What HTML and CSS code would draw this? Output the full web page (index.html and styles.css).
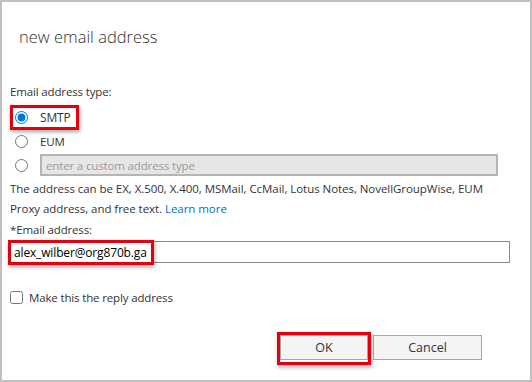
FILE: index.html
```html
<!DOCTYPE html>
<html lang="en">
<head>
    <meta charset="UTF-8">
    <title>new email address</title>
    <link rel="stylesheet" href="styles.css">
</head>
<body>
    <div class="dialog">
        <h1 class="title">new email address</h1>

        <div class="label">Email address type:</div>
        <div class="radio-row first">
            <span class="mark mark-smtp">
                <input type="radio" name="type" id="smtp" checked>
                <label for="smtp">SMTP</label>
            </span>
        </div>
        <div class="radio-row">
            <input type="radio" name="type" id="eum">
            <label for="eum">EUM</label>
        </div>
        <div class="radio-row">
            <input type="radio" name="type" id="custom">
            <input type="text" class="custom" placeholder="enter a custom address type" disabled>
        </div>

        <p class="hint">The address can be EX, X.500, X.400, MSMail, CcMail, Lotus Notes, NovellGroupWise, EUM Proxy address, and free text. <a href="#">Learn more</a></p>

        <div class="label label-email">*Email address:</div>
        <div class="email">
            <span class="mark mark-email">alex_wilber@org870b.ga</span>
        </div>

        <div class="check-row">
            <input type="checkbox" id="reply">
            <label for="reply">Make this the reply address</label>
        </div>

        <div class="actions">
            <span class="mark mark-ok"><button type="button" class="btn btn-ok">OK</button></span>
            <button type="button" class="btn btn-cancel">Cancel</button>
        </div>
    </div> <!-- dialog end -->
</body>
</html>
```

FILE: styles.css
```css
body {
    margin: 0;
    background-color: #fff;
}

body * {
    font-family: "Segoe UI", "Open Sans", "Noto Sans", sans-serif;
}

div.dialog {
    width: 532px;
    height: 382px;
    box-sizing: border-box;
    border: 2px solid #bfbfbf;
    padding: 0 20px 0 8px;
    color: #333;
    font-size: 11.5px;
    letter-spacing: -0.15px;
}

h1.title {
    margin: 0;
    padding: 23px 0 0 9px;
    height: 58px;
    font-size: 16.5px;
    font-weight: 300;
    line-height: 24px;
    letter-spacing: 0;
    color: #333;
}

div.label {
    line-height: 18px;
}

div.radio-row {
    display: flex;
    align-items: center;
    height: 24px;
    padding-left: 5px;
}

div.radio-row.first {
    margin-top: 4px;
}

div.radio-row input[type=radio] {
    width: 13px;
    height: 13px;
    margin: 0 12px 0 0;
    accent-color: #0078d7;
}

/* red highlight around the important parts */
span.mark {
    border: 3px solid #e3000f;
    box-shadow: 1px 2px 4px rgba(0, 0, 0, 0.35);
}

span.mark-smtp {
    display: inline-flex;
    align-items: center;
    height: 19px;
    margin-left: -5px;
    padding: 0 5px 0 2px;
    font-size: 12px;
}

input.custom {
    width: 458px;
    height: 22px;
    box-sizing: border-box;
    border: 2px solid #b4b4b4;
    background-color: #e6e6e6;
    padding: 0 4px;
    font-size: 11.5px;
    letter-spacing: -0.15px;
}

input.custom::placeholder {
    color: #9a9a9a;
}

p.hint {
    margin: 2px 0 0 0;
    max-width: 492px;
    line-height: 20px;
    letter-spacing: -0.05px;
}

p.hint a {
    color: #0072c6;
    text-decoration: none;
}

div.label-email {
    margin-top: 2px;
}

div.email {
    display: flex;
    height: 22px;
    box-sizing: border-box;
    border: 1px solid #8a8a8a;
    margin-top: 2px;
}

span.mark-email {
    display: inline-flex;
    align-items: center;
    margin: -2px 0 -3px -3px;
    padding: 0 4px 0 3px;
    color: #000;
    font-size: 12px;
}

div.check-row {
    display: flex;
    align-items: center;
    margin-top: 25px;
    height: 18px;
}

div.check-row input {
    width: 13px;
    height: 13px;
    margin: 0 6px 0 0;
}

div.actions {
    display: flex;
    justify-content: flex-end;
    align-items: flex-start;
    margin-top: 29px;
    padding-right: 28px;
}

span.mark-ok {
    display: inline-block;
    padding: 0 0 2px 0;
    margin-right: 2px;
    margin-top: -3px;
}

button.btn {
    display: block;
    height: 25px;
    border: 1px solid #a6a6a6;
    background-color: #f4f4f4;
    color: #333;
    font-size: 12.5px;
}

button.btn-ok {
    width: 88px;
}

button.btn-cancel {
    width: 109px;
}
```
